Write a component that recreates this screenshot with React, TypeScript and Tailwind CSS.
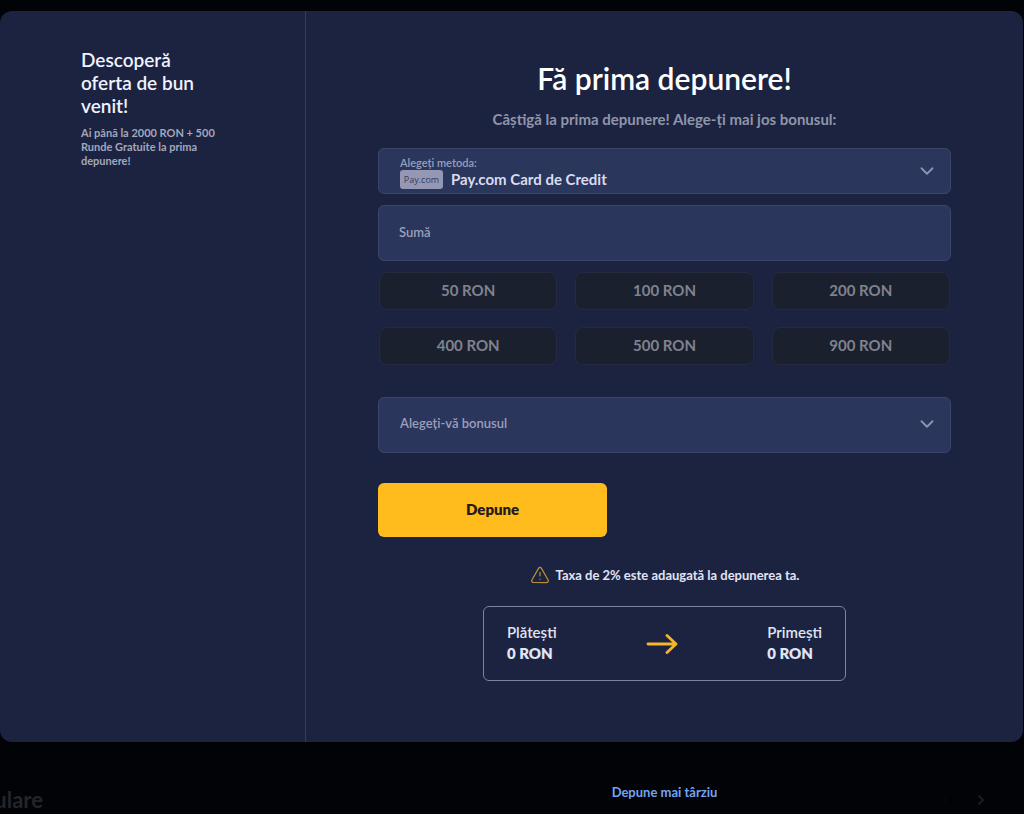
import { useState } from 'react'
import { ChevronDown, ChevronLeft, ChevronRight, TriangleAlert } from 'lucide-react'

const AMOUNTS = [50, 100, 200, 400, 500, 900]

const FIELD = 'flex w-full items-center rounded-md border border-[#3b4568] bg-[#2b365c]'

export default function App() {
  return (
    <div className="min-h-screen overflow-hidden bg-[#020306] pt-[11px] pr-px font-['Lato',sans-serif] text-[#e1e4f5]">
      <main className="flex rounded-xl bg-[#1b2340]">
        <OfferPanel />
        <DepositForm />
      </main>
      <Footer />
    </div>
  )
}

function OfferPanel() {
  return (
    <aside className="w-[306px] shrink-0 border-r border-[#343d5f] pt-[37px] pr-16 pl-[81px]">
      <h2 className="w-[130px] text-[19px] leading-[23px] font-semibold text-[#f0f2ff]">
        Descoperă oferta de bun venit!
      </h2>
      <p className="mt-[9px] w-[145px] text-[11px] leading-[14px] font-bold text-[#a3a7bd]">
        Ai până la 2000 RON + 500 Runde Gratuite la prima depunere!
      </p>
    </aside>
  )
}

function DepositForm() {
  const [amount, setAmount] = useState('')

  return (
    <form className="flex-1 px-[72px] pt-[47px] pb-[61px]" onSubmit={(e) => e.preventDefault()}>
      <h1 className="text-center text-[30px] leading-10 font-semibold text-white">Fă prima depunere!</h1>
      <p className="mt-[9px] text-center text-[15px] leading-6 font-bold text-[#9195aa]">
        Câștigă la prima depunere! Alege-ți mai jos bonusul:
      </p>

      <div className={`${FIELD} mt-[17px] h-[46px] pt-[3px] pr-3 pl-[21px]`}>
        <div className="flex-1">
          <label htmlFor="method" className="block text-[11px] leading-[14px] font-semibold text-[#9a9fbb]">
            Alegeți metoda:
          </label>
          <div className="flex items-center gap-2">
            <span className="flex h-[19px] w-[43px] items-center justify-center rounded-[3px] bg-[#9498b4] font-['Open_Sans',sans-serif] text-[9px] font-medium text-[#363b5c]">
              Pay.com
            </span>
            <select
              id="method"
              className="h-5 flex-1 appearance-none bg-transparent pb-0.5 text-[15px] leading-[18px] font-bold text-[#d9dcef] outline-none">
              <option>Pay.com Card de Credit</option>
            </select>
          </div>
        </div>
        <ChevronDown className="mb-[3px] h-[22px] w-[22px] text-[#8c93b4]" />
      </div>

      <input
        aria-label="Sumă"
        placeholder="Sumă"
        inputMode="numeric"
        value={amount}
        onChange={(e) => setAmount(e.target.value)}
        className={`${FIELD} mt-[11px] h-14 px-5 pb-0.5 text-[13px] font-semibold placeholder-[#9a9fbb] outline-none`}
      />

      <div className="mt-[11px] grid grid-cols-3 gap-x-[18px] gap-y-[17px] px-px">
        {AMOUNTS.map((value) => (
          <button
            key={value}
            type="button"
            onClick={() => setAmount(String(value))}
            className="h-[38px] rounded-lg border border-[#242b3f] bg-[#1a202e] pb-0.5 text-[15px] font-bold text-[#80838f]">
            {value} RON
          </button>
        ))}
      </div>

      <div className={`${FIELD} mt-8 h-14 pr-3 pb-0.5 pl-[21px]`}>
        <select
          aria-label="Alegeți-vă bonusul"
          className="h-6 flex-1 appearance-none bg-transparent text-[13px] font-semibold text-[#9a9fbb] outline-none">
          <option>Alegeți-vă bonusul</option>
        </select>
        <ChevronDown className="h-[22px] w-[22px] text-[#8c93b4]" />
      </div>

      <button
        type="submit"
        className="mt-[30px] h-[54px] w-2/5 rounded-md bg-[#ffbc1c] pb-0.5 text-[15px] font-extrabold text-[#261b1b]">
        Depune
      </button>

      <p className="mt-[28px] flex items-center justify-center gap-1.5 text-[13px] leading-5 font-bold">
        <TriangleAlert className="h-5 w-5 text-[#b98f38]" strokeWidth={1.5} />
        Taxa de 2% este adaugată la depunerea ta.
      </p>

      <div className="mx-auto mt-[21px] flex h-[75px] w-[363px] items-center justify-between rounded-md border border-[#7c829f] px-[23px] text-[15px] leading-[21px]">
        <div className="pb-px">
          <p className="font-semibold">Plătești</p>
          <p className="font-extrabold">0 RON</p>
        </div>
        <PayArrow />
        <div className="pb-px">
          <p className="font-semibold">Primești</p>
          <p className="font-extrabold">0 RON</p>
        </div>
      </div>
    </form>
  )
}

function PayArrow() {
  return (
    <svg viewBox="0 0 32 20" className="h-5 w-8" fill="none" stroke="#f5b62b" strokeWidth="2.8" strokeLinecap="round" strokeLinejoin="round">
      <path d="M2 10H30M21 1.5L30 10L21 18.5" />
    </svg>
  )
}

// The section heading and its arrows belong to the dimmed page under the dialog.
function Footer() {
  return (
    <footer className="flex h-[72px] items-end">
      <div className="w-[306px] shrink-0">
        <div className="flex w-[43px] justify-end overflow-hidden">
          <h2 className="text-[22px] leading-7 font-bold text-[#242529]">Populare</h2>
        </div>
      </div>
      <div className="grid flex-1 grid-cols-[1fr_auto_1fr] items-end">
        <a href="#later" className="col-start-2 pb-3 text-[13px] leading-5 font-bold text-[#73a4f5]">
          Depune mai târziu
        </a>
        <div className="flex items-center justify-end gap-5 pr-[34px] pb-1.5">
          <button type="button" aria-label="Înapoi" className="text-[#08090d]">
            <ChevronLeft className="h-4 w-4" />
          </button>
          <button type="button" aria-label="Înainte" className="text-[#1b1c21]">
            <ChevronRight className="h-4 w-4" strokeWidth={3} />
          </button>
        </div>
      </div>
    </footer>
  )
}
